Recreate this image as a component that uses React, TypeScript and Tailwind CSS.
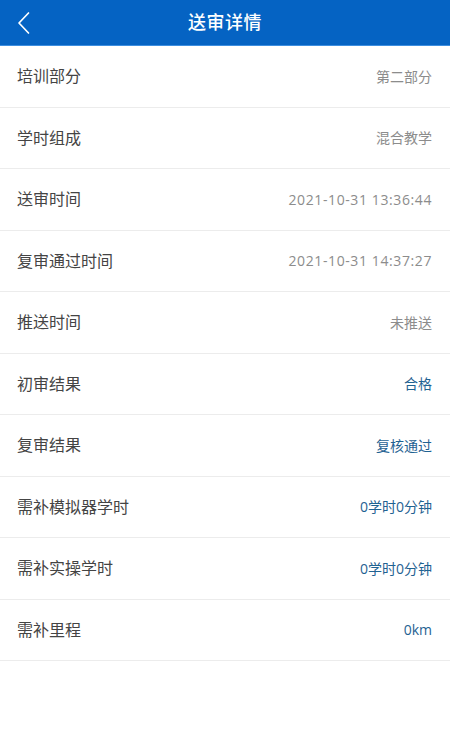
type Row = { label: string; value: string; tone: 'gray' | 'blue'; wide?: boolean }

const rows: Row[] = [
  { label: '培训部分', value: '第二部分', tone: 'gray' },
  { label: '学时组成', value: '混合教学', tone: 'gray' },
  { label: '送审时间', value: '2021-10-31 13:36:44', tone: 'gray', wide: true },
  { label: '复审通过时间', value: '2021-10-31 14:37:27', tone: 'gray', wide: true },
  { label: '推送时间', value: '未推送', tone: 'gray' },
  { label: '初审结果', value: '合格', tone: 'blue' },
  { label: '复审结果', value: '复核通过', tone: 'blue' },
  { label: '需补模拟器学时', value: '0学时0分钟', tone: 'blue' },
  { label: '需补实操学时', value: '0学时0分钟', tone: 'blue' },
  { label: '需补里程', value: '0km', tone: 'blue' },
]

export default function App() {
  return (
    <div
      className="min-h-[750px] w-full bg-white"
      style={{ fontFamily: '"Open Sans", "Noto Sans CJK SC", sans-serif' }}
    >
      {/* top bar */}
      <header className="relative flex h-[46px] items-center justify-center bg-[#0563c3] border-b border-[#3d8ee0]">
        <button className="absolute left-[12px] top-1/2 -translate-y-1/2 p-1">
          <svg width="16" height="24" viewBox="0 0 16 24" fill="none">
            <path d="M12.5 2 3 12l9.5 10" stroke="white" strokeWidth="1.7" strokeLinecap="round" strokeLinejoin="round" />
          </svg>
        </button>
        <h1 className="text-[18px] font-medium text-white tracking-[0.5px]">送审详情</h1>
      </header>

      <ul>
        {rows.map((r) => (
          <li
            key={r.label}
            className="flex h-[61.5px] items-center justify-between border-b border-[#ececec] pl-[17px] pr-[18px]"
          >
            <span className="text-[16px] text-[#444444]">{r.label}</span>
            <span
              className={clsxTone(r)}
            >
              {r.value}
            </span>
          </li>
        ))}
      </ul>
    </div>
  )
}

function clsxTone(r: Row) {
  const color = r.tone === 'blue' ? 'text-[14px] text-[#1f6292]' : 'text-[14px] text-[#8c8c8c]'
  return r.wide ? `${color} tracking-[0.6px]` : color
}
